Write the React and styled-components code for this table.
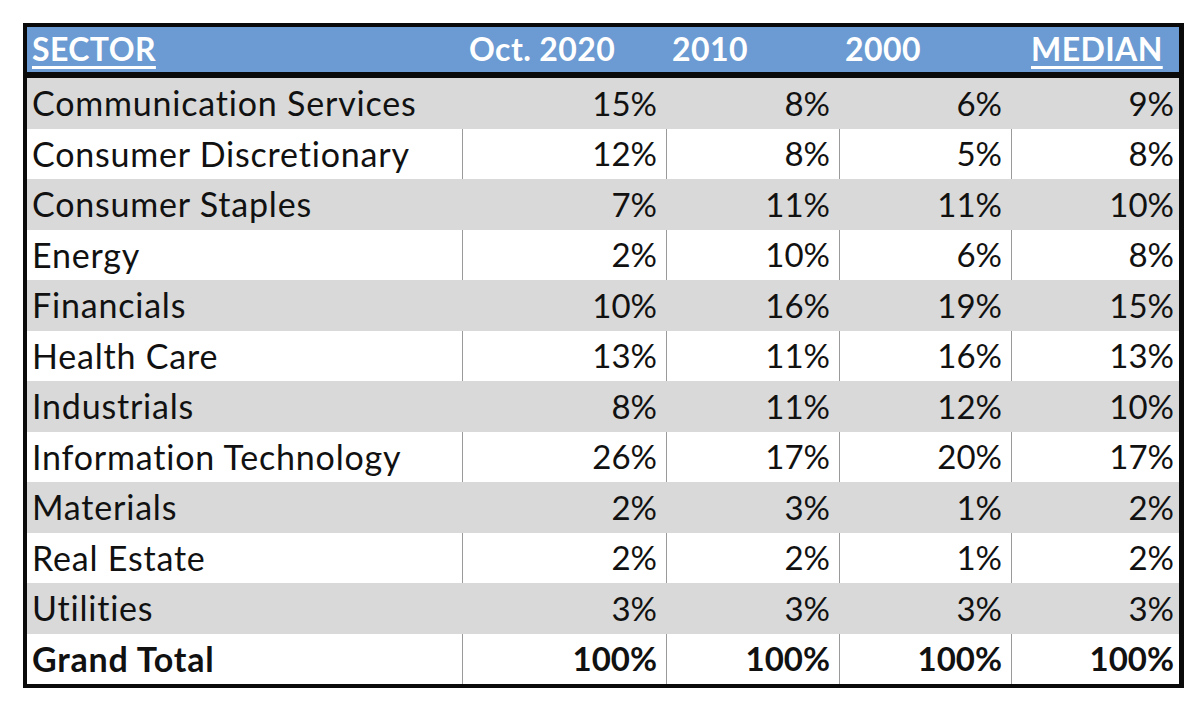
import React from "react";
import styled, { createGlobalStyle } from "styled-components";

const Global = createGlobalStyle`
  html, body { margin: 0; padding: 0; background: #ffffff; }
  body { font-family: Lato, "Liberation Sans", sans-serif; }
`;

const Page = styled.div`
  width: 1200px;
  height: 702px;
  padding: 23px 0 0 23px;
  box-sizing: border-box;
  background: #ffffff;
`;

const Table = styled.div`
  display: inline-block;
  border: 4px solid #0a0a0a;
  border-right-width: 5px;
  background: #ffffff;
`;

const COLS = "435px 204px 173px 172px 168px";

const HeaderRow = styled.div`
  display: grid;
  grid-template-columns: ${COLS};
  height: 45px;
  background: #6b9bd2;
  border-bottom: 6px solid #0a0a0a;
`;

const HeaderCell = styled.div`
  display: flex;
  align-items: center;
  padding: 0 0 2px ${(p) => p.$pad}px;
  color: #ffffff;
  font-weight: 700;
  font-size: 32px;
  letter-spacing: 0.4px;
  line-height: 1;
  span {
    text-decoration: ${(p) => (p.$underline ? "underline" : "none")};
    text-decoration-thickness: 3px;
    text-underline-offset: 5px;
  }
`;

const Row = styled.div`
  display: grid;
  grid-template-columns: ${COLS};
  height: ${(p) => p.$h}px;
  background: ${(p) => (p.$shade ? "#d9d9d9" : "#ffffff")};
`;

const LabelCell = styled.div`
  display: flex;
  align-items: center;
  padding: 0 0 2px 5px;
  font-size: 34px;
  letter-spacing: 0.8px;
  font-weight: ${(p) => (p.$bold ? 700 : 400)};
  color: #111111;
  white-space: nowrap;
`;

const NumCell = styled.div`
  display: flex;
  align-items: center;
  justify-content: flex-end;
  padding: 0 ${(p) => p.$padR}px 2px 0;
  box-sizing: border-box;
  font-size: 33px;
  font-weight: ${(p) => (p.$bold ? 700 : 400)};
  color: #111111;
  border-left: 1px solid ${(p) => (p.$shade ? "transparent" : "#9a9a9a")};
`;

const rows = [
  ["Communication Services", "15%", "8%", "6%", "9%"],
  ["Consumer Discretionary", "12%", "8%", "5%", "8%"],
  ["Consumer Staples", "7%", "11%", "11%", "10%"],
  ["Energy", "2%", "10%", "6%", "8%"],
  ["Financials", "10%", "16%", "19%", "15%"],
  ["Health Care", "13%", "11%", "16%", "13%"],
  ["Industrials", "8%", "11%", "12%", "10%"],
  ["Information Technology", "26%", "17%", "20%", "17%"],
  ["Materials", "2%", "3%", "1%", "2%"],
  ["Real Estate", "2%", "2%", "1%", "2%"],
  ["Utilities", "3%", "3%", "3%", "3%"],
  ["Grand Total", "100%", "100%", "100%", "100%"],
];

const headers = [
  { t: "SECTOR", pad: 5, u: true },
  { t: "Oct. 2020", pad: 7, u: false },
  { t: "2010", pad: 6, u: false },
  { t: "2000", pad: 6, u: false },
  { t: "MEDIAN", pad: 20, u: true },
];

export default function App() {
  return (
    <>
      <Global />
      <Page>
        <Table>
          <HeaderRow>
            {headers.map((h) => (
              <HeaderCell key={h.t} $pad={h.pad} $underline={h.u}>
                <span>{h.t}</span>
              </HeaderCell>
            ))}
          </HeaderRow>
          {rows.map((r, i) => {
            const shade = i % 2 === 0 && i !== 11;
            const bold = i === 11;
            return (
              <Row key={r[0]} $shade={shade} $h={i % 2 === 0 ? 51 : 50}>
                <LabelCell $bold={bold}>{r[0]}</LabelCell>
                {r.slice(1).map((v, j) => (
                  <NumCell key={j} $shade={shade} $bold={bold} $padR={j === 3 ? 5 : 9}>
                    {v}
                  </NumCell>
                ))}
              </Row>
            );
          })}
        </Table>
      </Page>
    </>
  );
}
